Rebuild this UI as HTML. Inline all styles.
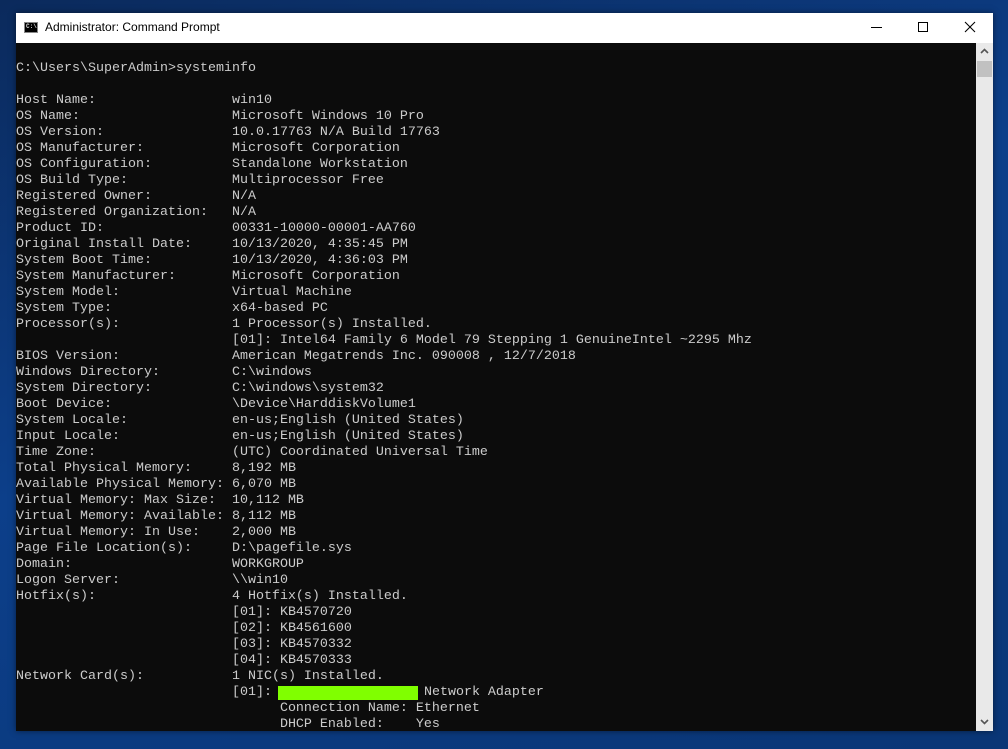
<!DOCTYPE html>
<html><head><style>
html,body{margin:0;padding:0;}
body{width:1008px;height:749px;overflow:hidden;background:linear-gradient(160deg,#0b2a5c 0%,#0c3f8a 45%,#0a3676 100%);position:relative;font-family:"Liberation Sans",sans-serif;}
.win{position:absolute;left:16px;top:13px;width:977px;height:718px;background:#0c0c0c;box-shadow:0 0 6px rgba(0,0,0,.5);}
.title{position:absolute;left:0;top:0;width:977px;height:30px;background:#fff;}
.title .t{position:absolute;left:29px;top:7px;font-size:12px;color:#000;}
.icon{position:absolute;left:8px;top:9px;width:14px;height:11px;background:#000;border:1px solid #888;box-sizing:border-box;}
.icon span{position:absolute;left:1px;top:1px;font:bold 6px "Liberation Mono",monospace;color:#ddd;line-height:6px;}
.con{position:absolute;left:0;top:30px;width:960px;height:688px;overflow:hidden;padding-top:18px;box-sizing:border-box;}
pre{margin:0;font-family:"Liberation Mono",monospace;font-size:13.33px;line-height:16px;color:#cccccc;}
.sb{position:absolute;left:960px;top:30px;width:17px;height:688px;background:#e9e9e9;}
.thumb{position:absolute;left:1px;top:18px;width:15px;height:16px;background:#c1c1c1;}
.g{display:inline-block;width:140px;height:14px;margin:1px -2px 0 -2px;vertical-align:top;background:#80ff00;}
</style></head><body>
<div class="win">
<div class="title">
<div class="icon"><span>C:\</span></div>
<div class="t">Administrator: Command Prompt</div>
<svg style="position:absolute;left:850px;top:8px" width="120" height="14">
<line x1="5" y1="6.5" x2="16" y2="6.5" stroke="#000" stroke-width="1"/>
<rect x="52.5" y="1.5" width="9" height="9" fill="none" stroke="#000" stroke-width="1"/>
<line x1="99" y1="1" x2="109" y2="11" stroke="#000" stroke-width="1.1"/>
<line x1="109" y1="1" x2="99" y2="11" stroke="#000" stroke-width="1.1"/>
</svg>
</div>
<div class="con"><pre>C:\Users\SuperAdmin>systeminfo

Host Name:                 win10
OS Name:                   Microsoft Windows 10 Pro
OS Version:                10.0.17763 N/A Build 17763
OS Manufacturer:           Microsoft Corporation
OS Configuration:          Standalone Workstation
OS Build Type:             Multiprocessor Free
Registered Owner:          N/A
Registered Organization:   N/A
Product ID:                00331-10000-00001-AA760
Original Install Date:     10/13/2020, 4:35:45 PM
System Boot Time:          10/13/2020, 4:36:03 PM
System Manufacturer:       Microsoft Corporation
System Model:              Virtual Machine
System Type:               x64-based PC
Processor(s):              1 Processor(s) Installed.
                           [01]: Intel64 Family 6 Model 79 Stepping 1 GenuineIntel ~2295 Mhz
BIOS Version:              American Megatrends Inc. 090008 , 12/7/2018
Windows Directory:         C:\windows
System Directory:          C:\windows\system32
Boot Device:               \Device\HarddiskVolume1
System Locale:             en-us;English (United States)
Input Locale:              en-us;English (United States)
Time Zone:                 (UTC) Coordinated Universal Time
Total Physical Memory:     8,192 MB
Available Physical Memory: 6,070 MB
Virtual Memory: Max Size:  10,112 MB
Virtual Memory: Available: 8,112 MB
Virtual Memory: In Use:    2,000 MB
Page File Location(s):     D:\pagefile.sys
Domain:                    WORKGROUP
Logon Server:              \\win10
Hotfix(s):                 4 Hotfix(s) Installed.
                           [01]: KB4570720
                           [02]: KB4561600
                           [03]: KB4570332
                           [04]: KB4570333
Network Card(s):           1 NIC(s) Installed.
                           [01]: <span class="g"></span> Network Adapter
                                 Connection Name: Ethernet
                                 DHCP Enabled:    Yes
</pre></div>
<div class="sb"><div class="thumb"></div>
<svg style="position:absolute;left:4px;top:5px" width="9" height="6"><polyline points="1,5 4.5,1.5 8,5" fill="none" stroke="#555" stroke-width="1.6"/></svg>
<svg style="position:absolute;left:4px;top:676px" width="9" height="6"><polyline points="1,1 4.5,4.5 8,1" fill="none" stroke="#555" stroke-width="1.6"/></svg>
</div>
</div>
</body></html>
